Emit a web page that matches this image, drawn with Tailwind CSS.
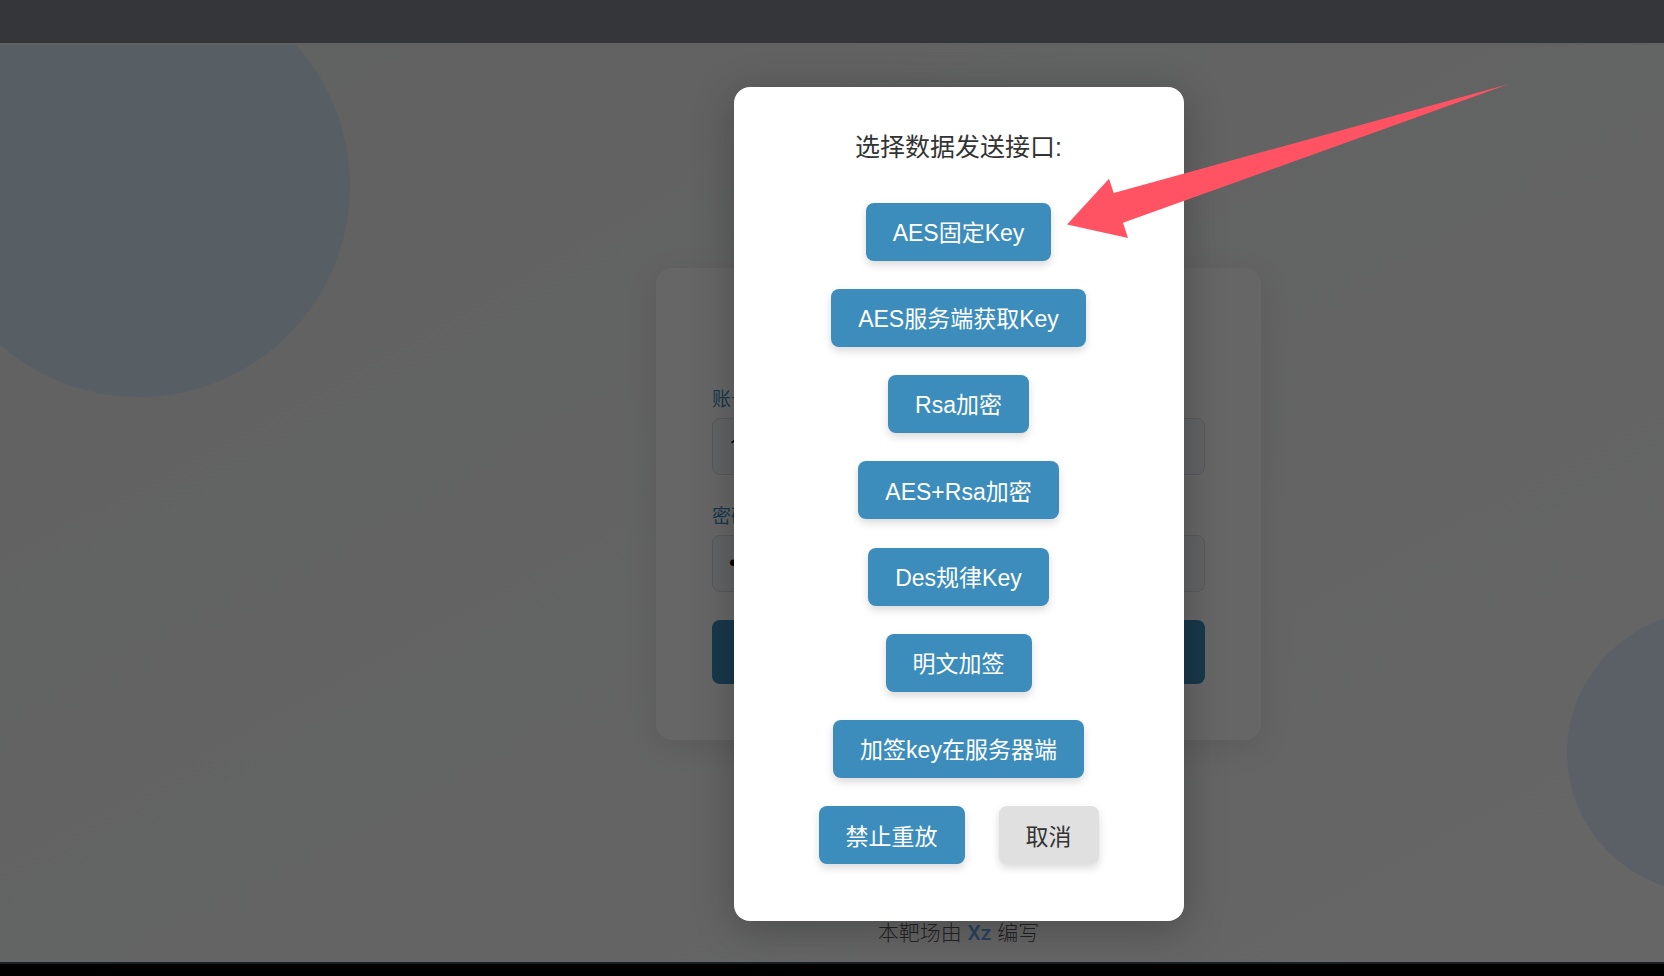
<!DOCTYPE html>
<html lang="zh-CN">
<head>
<meta charset="utf-8">
<title>选择数据发送接口</title>
<script src="https://cdn.jsdelivr.net/npm/@tailwindcss/browser@4"></script>
</head>
<body class="flex h-screen flex-col overflow-hidden bg-black font-['Liberation_Sans','Noto_Sans_CJK_SC',sans-serif]">
  <header class="h-[45px] shrink-0 border-b-2 border-[#616161] bg-[#35363a]"></header>

  <main class="relative grid min-h-0 flex-1 grid-rows-[1fr_auto_1fr] justify-items-center overflow-hidden bg-linear-to-br from-[#f2f3f3] via-[#f8f9f9] to-[#ffffff] pl-[253px]">
    <!-- Decorative circles -->
    <div class="absolute -top-[70px] -left-[72px] size-[422px] rounded-full bg-[#d9ebfa]"></div>
    <div class="absolute -right-[184px] bottom-[69px] size-[281px] rounded-full bg-[#e3f0ff]"></div>

    <form class="relative row-start-2 flex w-[605px] flex-col rounded-2xl bg-white px-14 pt-[118px] pb-14 shadow-[0_8px_32px_rgba(0,0,0,0.1)]">
      <label for="account" class="mb-1 text-[19px] leading-7 text-[#3c8dbc]">账号</label>
      <input id="account" type="text" value="1" class="mb-7 h-[57px] rounded-lg border border-[#dcdcdc] bg-[#f3f7fc] px-4 font-['Open_Sans',sans-serif] text-[22px] text-black">
      <label for="password" class="mb-1 text-[19px] leading-7 text-[#3c8dbc]">密码</label>
      <input id="password" type="password" value="123456" class="mb-7 h-[57px] rounded-lg border border-[#dcdcdc] bg-[#f3f7fc] px-4 text-[23px] text-black">
      <button type="submit" aria-label="登录" class="h-16 rounded-lg bg-[#3c8dbc]"></button>
    </form>

    <footer class="row-start-3 mb-[15px] self-end text-[21px] leading-7 font-light text-[#555555]">本靶场由 <a href="#" class="font-['Roboto',sans-serif] font-medium text-[#6aa5f0]">Xz</a> 编写</footer>

    <!-- Modal overlay -->
    <div class="absolute inset-0 flex items-center justify-center bg-black/60 pl-[253px]">
      <section role="dialog" aria-labelledby="dialog-title" class="relative flex w-[450px] flex-col items-center rounded-2xl bg-white pt-[41px] pb-14 shadow-[0_8px_40px_rgba(0,0,0,0.25)]">
        <h2 id="dialog-title" class="mb-9 text-[25px] leading-[39px] text-[#333333]">选择数据发送接口:</h2>
        <div class="flex min-h-[662px] flex-col items-center justify-between text-[23px] text-white">
          <button type="button" class="h-[58px] rounded-lg bg-[#3c8dbc] px-[27px] pt-[3px] shadow-[0_4px_8px_rgba(0,0,0,0.15)]">AES固定Key</button>
          <button type="button" class="h-[58px] rounded-lg bg-[#3c8dbc] px-[27px] pt-[3px] shadow-[0_4px_8px_rgba(0,0,0,0.15)]">AES服务端获取Key</button>
          <button type="button" class="h-[58px] rounded-lg bg-[#3c8dbc] px-[27px] pt-[3px] shadow-[0_4px_8px_rgba(0,0,0,0.15)]">Rsa加密</button>
          <button type="button" class="h-[58px] rounded-lg bg-[#3c8dbc] px-[27px] pt-[3px] shadow-[0_4px_8px_rgba(0,0,0,0.15)]">AES+Rsa加密</button>
          <button type="button" class="h-[58px] rounded-lg bg-[#3c8dbc] px-[27px] pt-[3px] shadow-[0_4px_8px_rgba(0,0,0,0.15)]">Des规律Key</button>
          <button type="button" class="h-[58px] rounded-lg bg-[#3c8dbc] px-[27px] pt-[3px] shadow-[0_4px_8px_rgba(0,0,0,0.15)]">明文加签</button>
          <button type="button" class="h-[58px] rounded-lg bg-[#3c8dbc] px-[27px] pt-[3px] shadow-[0_4px_8px_rgba(0,0,0,0.15)]">加签key在服务器端</button>
          <div class="flex gap-[34px]">
            <button type="button" class="h-[58px] rounded-lg bg-[#3c8dbc] px-[27px] pt-[3px] shadow-[0_4px_8px_rgba(0,0,0,0.15)]">禁止重放</button>
            <button type="button" class="h-[58px] rounded-lg bg-[#e0e0e0] px-[27px] pt-[3px] text-[#333333] shadow-[0_4px_8px_rgba(0,0,0,0.15)]">取消</button>
          </div>
        </div>
        <!-- Arrow pointing at the first option -->
        <svg class="pointer-events-none absolute top-[-3px] left-[333px] h-[155px] w-[444px]" viewBox="0 0 444 155" fill="#ff5364" aria-hidden="true">
          <path d="M0 140.5 42 94.7 46.7 109 442 0 56 138.7 61 154Z"/>
        </svg>
      </section>
    </div>
  </main>

  <div class="h-[14px] shrink-0 border-t-2 border-[#182024] bg-black"></div>
</body>
</html>
